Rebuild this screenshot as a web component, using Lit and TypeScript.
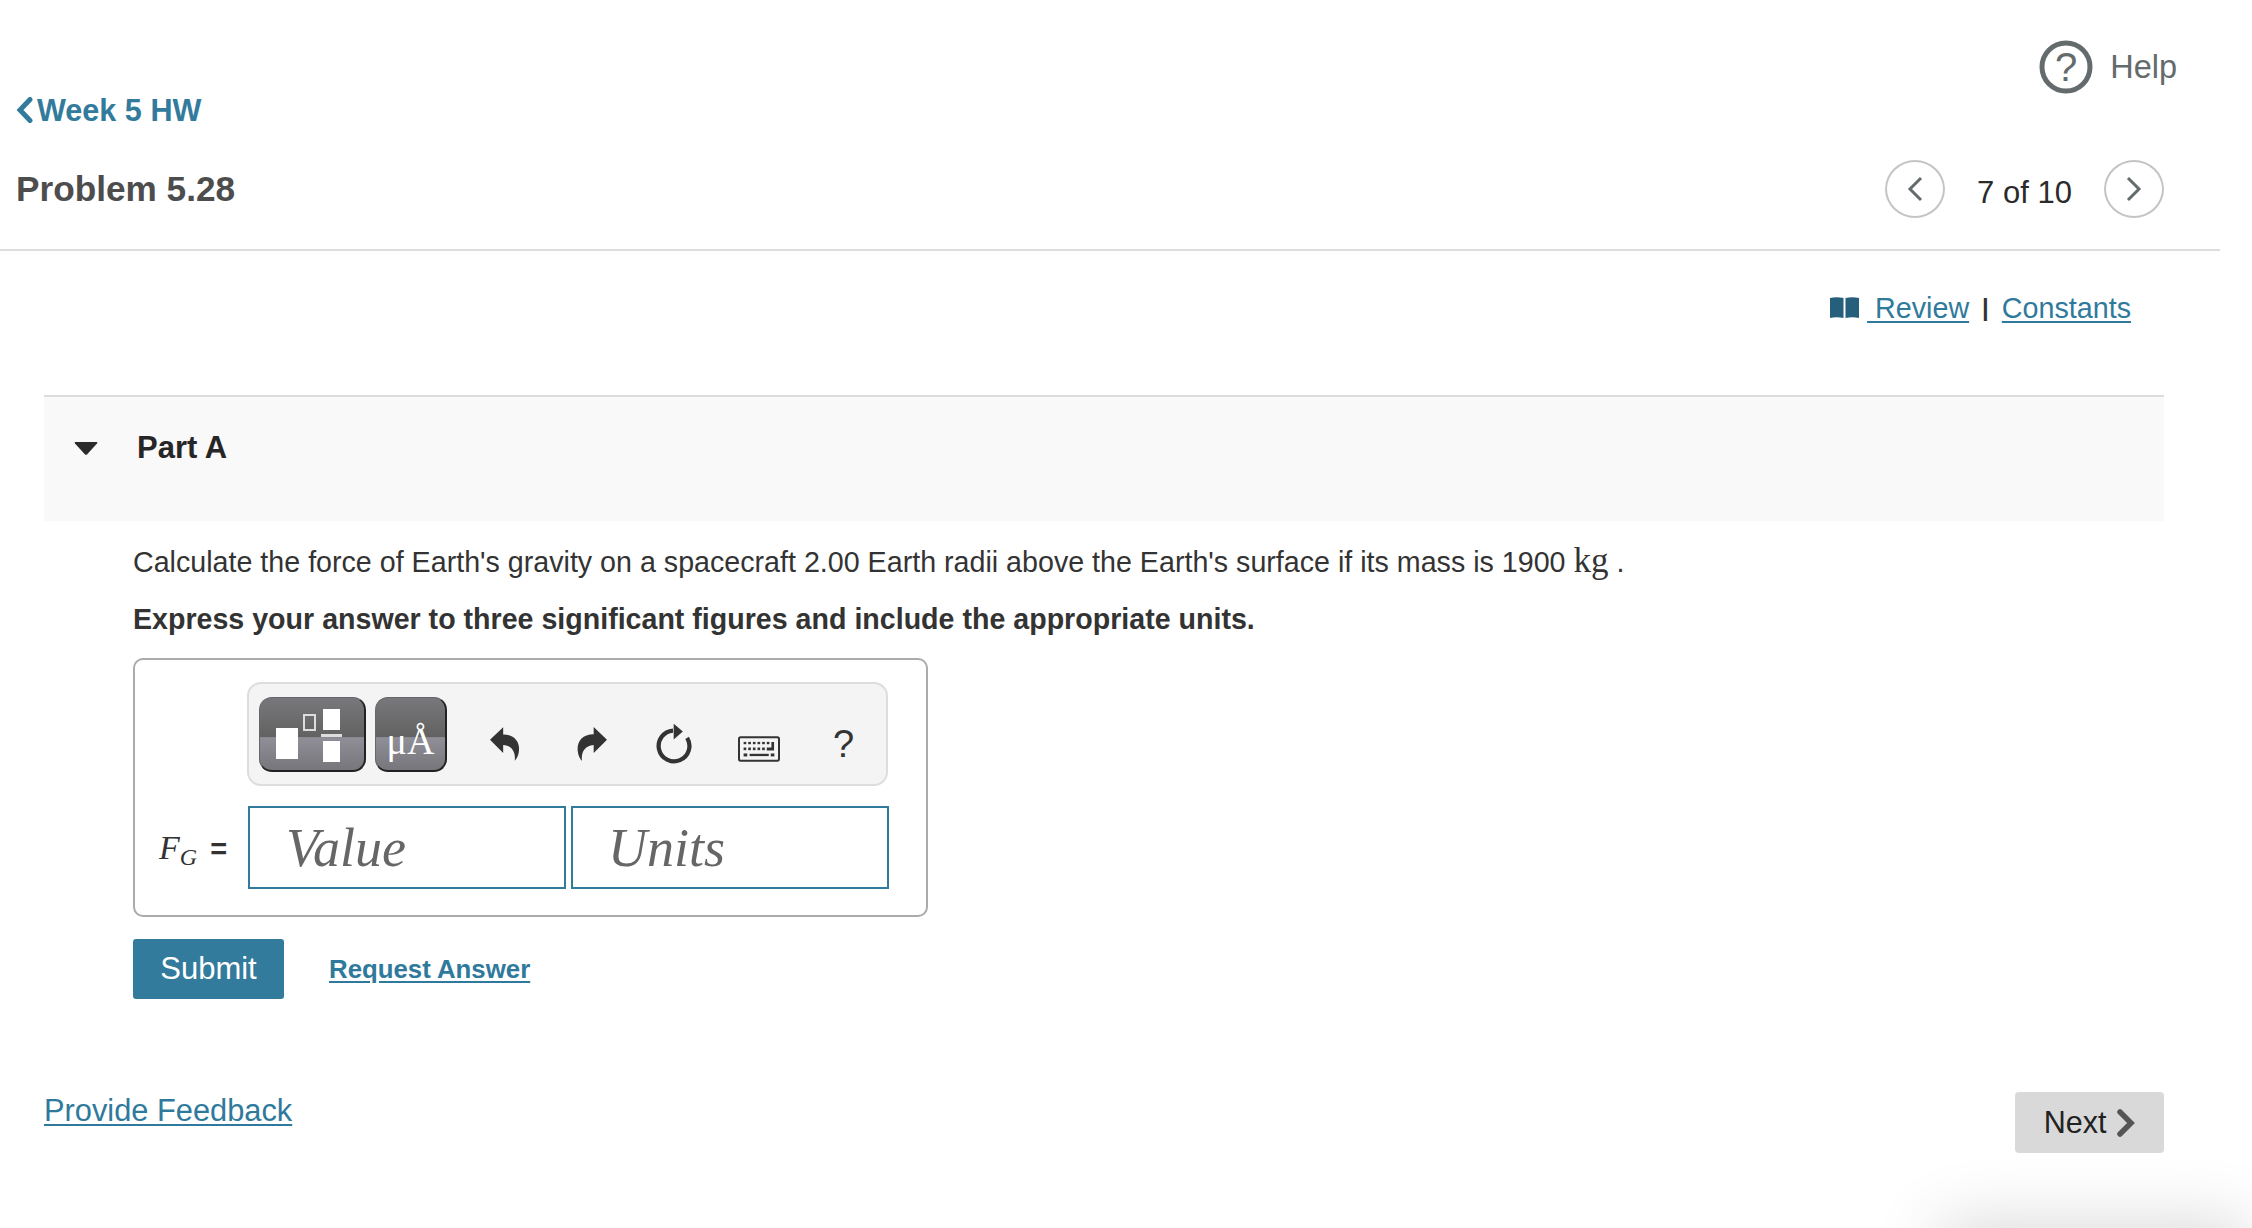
import { LitElement, html, css, svg } from "lit";
import { customElement } from "lit/decorators.js";

const keyRows = [
  [850, 864, 878, 892, 906, 920].map((x) => svg`<rect x=${x} y="217" width="8" height="7"/>`),
  [850, 864, 878, 892, 906].map((x) => svg`<rect x=${x} y="234" width="8" height="8"/>`),
];

@customElement("app-root")
export class AppRoot extends LitElement {
  static styles = css`
    :host { display: block; }
    .page {
      position: relative; height: 1228px; overflow: hidden; background: #fff;
      font-family: "Liberation Sans", Arial, sans-serif; color: #333;
    }
    a { color: #2f7a9c; }
    .header {
      width: 2220px; height: 251px; box-sizing: border-box; border-bottom: 2px solid #ddd;
      display: flex; justify-content: space-between;
    }
    .left { padding: 92px 0 0 16px; }
    .back { display: flex; align-items: center; gap: 4px; font-size: 30.6px; font-weight: 700; color: #337b9c; line-height: 36px; }
    .title { margin-top: 41px; font-size: 35.2px; font-weight: 700; color: #4d4d4d; line-height: 40px; }
    .right { display: flex; flex-direction: column; align-items: flex-end; padding: 40px 56px 0 0; }
    .help { display: flex; align-items: center; gap: 17px; font-size: 32.5px; color: #646b6c; margin-right: -13px; }
    .pager { display: flex; align-items: center; margin-top: 66px; }
    .circle {
      width: 60px; height: 58px; box-sizing: border-box; border: 2px solid #c4c4c4; border-radius: 50%;
      display: flex; align-items: center; justify-content: center;
    }
    .count { width: 159px; text-align: center; font-size: 31px; color: #2b2b2b; padding-top: 8px; }
    .links {
      display: flex; justify-content: flex-end; align-items: center; margin-top: 37px; padding-right: 121px;
      font-size: 28.7px; line-height: 40px;
    }
    .links a { text-underline-offset: 3px; text-decoration-thickness: 2px; }
    .links svg { margin-right: 8px; }
    .sep { margin: 0 13px 0 13px; color: #333; font-size: 24px; font-weight: 700; }
    .part { margin: 67px 88px 0 44px; height: 126px; box-sizing: border-box; background: #f9f9f9; border-top: 2px solid #ddd; display: flex; align-items: flex-start; padding: 33px 0 0 30px; }
    .part h2 { margin: 0 0 0 39px; font-size: 31px; line-height: 36px; font-weight: 700; color: #262626; }
    .part svg { margin-top: 12px; }
    .body { padding: 0 0 0 133px; }
    .prompt { margin: 22px 0 0; font-size: 28.65px; line-height: 36px; color: #333; }
    .kg { font-family: "Liberation Serif", serif; font-size: 35px; }
    .instr { margin: 21px 0 0; font-size: 28.6px; line-height: 36px; font-weight: 700; color: #333; }
    .editor {
      margin-top: 21px; width: 795px; height: 259px; box-sizing: border-box; border: 2px solid #ababab; border-radius: 10px;
      padding: 22px 0 0 112px;
    }
    .toolbar {
      width: 641px; height: 104px; box-sizing: border-box; border: 2px solid #ddd; border-radius: 14px; background: #f4f4f4;
      display: flex; align-items: center; padding-left: 10px;
    }
    .tbtn {
      height: 75px; box-sizing: border-box; border-radius: 13px; border: 1px solid #666; border-right: 2px solid #222; border-bottom: 2px solid #222;
      background: linear-gradient(#78777b 0, #626262 54%, #908f98 55%, #77767b 100%);
      display: flex; align-items: center; justify-content: center;
    }
    .t1 { width: 107px; }
    .t2 {
      width: 72px; margin-left: 9px; color: #fff; font-family: "Liberation Serif", serif; font-size: 38px; line-height: 1; padding-top: 14px;
    }
    .tool { display: block; margin-top: 20px; }
    .undo { margin-left: 43px; }
    .redo { margin-left: 58px; }
    .refresh { margin-left: 49px; }
    .kb { margin-left: 46px; margin-top: 30px; }
    .q { margin-left: 53px; margin-top: 20px; font-size: 38px; color: #333; line-height: 1; }
    .row { display: flex; align-items: center; margin-top: 20px; margin-left: -112px; padding-left: 24px; }
    .eq { width: 89px; font-family: "Liberation Serif", serif; font-size: 34px; color: #333; white-space: nowrap; }
    .eq i sub { font-size: 24px; line-height: 0; vertical-align: -6px; }
    .eq span { font-family: "Liberation Sans", sans-serif; font-size: 29px; font-weight: 700; margin-left: 13px; }
    .field {
      width: 318px; height: 83px; box-sizing: border-box; border: 2px solid #337b9c;
      font-family: "Liberation Serif", serif; font-style: italic; font-size: 54px; color: #666;
      display: flex; align-items: center; padding-left: 36px;
    }
    .field + .field { margin-left: 5px; padding-left: 35px; }
    .actions { display: flex; align-items: center; margin-top: 22px; }
    .submit {
      width: 151px; height: 60px; background: #337b9c; border-radius: 3px; color: #fff; font-size: 31px;
      display: flex; align-items: center; justify-content: center;
    }
    .req { margin-left: 45px; font-size: 25.8px; font-weight: 700; text-underline-offset: 3px; }
    .foot { display: flex; justify-content: space-between; align-items: flex-start; margin: 93px 88px 0 44px; }
    .fb { font-size: 30.8px; line-height: 38px; text-underline-offset: 3px; text-decoration-thickness: 2px; }
    .next {
      width: 149px; height: 61px; background: #d9d9d9; border-radius: 4px; color: #222; font-size: 30.5px;
      display: flex; align-items: center; justify-content: center; gap: 11px; box-sizing: border-box;
    }
    .glow {
      position: absolute; left: 1960px; top: 1245px; width: 270px; height: 60px;
      box-shadow: 0 0 70px 20px rgba(0, 0, 0, 0.16);
    }
  `;

  render() {
    return html`<div class="page">
      <div class="header">
        <div class="left">
          <div class="back">
            <svg width="17" height="26" viewBox="0 0 17 26"><path d="M14 2.5 L4 13 L14 23.5" fill="none" stroke="#337b9c" stroke-width="5" stroke-linecap="round" stroke-linejoin="miter"/></svg>
            <span>Week 5 HW</span>
          </div>
          <div class="title">Problem 5.28</div>
        </div>
        <div class="right">
          <div class="help">
            <svg width="54" height="54" viewBox="0 0 54 54"><circle cx="27" cy="27" r="24" fill="none" stroke="#646b6c" stroke-width="5"/><text x="27" y="41" text-anchor="middle" font-family="Liberation Sans" font-size="40" fill="#646b6c">?</text></svg>
            <span>Help</span>
          </div>
          <div class="pager">
            <div class="circle"><svg width="18" height="28" viewBox="0 0 18 28"><path d="M15 3 L4 14 L15 25" fill="none" stroke="#646b6c" stroke-width="3"/></svg></div>
            <div class="count">7 of 10</div>
            <div class="circle"><svg width="18" height="28" viewBox="0 0 18 28"><path d="M3 3 L14 14 L3 25" fill="none" stroke="#646b6c" stroke-width="3"/></svg></div>
          </div>
        </div>
      </div>
      <div class="links">
        <svg width="29" height="22" viewBox="0 0 29 22"><path d="M0 1 C4 0 9 0 13.5 1 V21 C9 20 4 20 0 21 Z M15.5 1 C20 0 25 0 29 1 V21 C25 20 20 20 15.5 21 Z" fill="#255f7c"/></svg>
        <a href="#">&nbsp;Review</a><span class="sep">|</span><a href="#">Constants</a>
      </div>
      <div class="part">
        <svg width="24" height="13" viewBox="0 0 24 13"><path d="M1.5 0 H22.5 Q24 0 23 1.5 L13 12.5 Q12 13.2 11 12.5 L1 1.5 Q0 0 1.5 0 Z" fill="#2b2b2b"/></svg>
        <h2>Part A</h2>
      </div>
      <div class="body">
        <p class="prompt">Calculate the force of Earth's gravity on a spacecraft 2.00 Earth radii above the Earth's surface if its mass is 1900 <span class="kg">kg</span> .</p>
        <p class="instr">Express your answer to three significant figures and include the appropriate units.</p>
        <div class="editor">
          <div class="toolbar">
            <div class="tbtn t1">
              <svg width="104" height="72" viewBox="0 0 104 72" fill="#fff">
                <rect x="16" y="30" width="22" height="31"/>
                <rect x="44" y="17" width="11" height="15" fill="none" stroke="#ddd" stroke-width="2"/>
                <rect x="63" y="11" width="17" height="21"/>
                <rect x="61" y="36" width="21" height="3" fill="#ddd"/>
                <rect x="63" y="43" width="17" height="21"/>
              </svg>
            </div>
            <div class="tbtn t2">μÅ</div>
            <svg class="tool undo" width="29" height="34" viewBox="90 170 88 102"><path d="M90 208 L130 170 V192 C165 192 180 215 178 240 C177 255 172 265 165 272 C168 250 160 226 130 224 V248 Z" fill="#333"/></svg>
            <svg class="tool redo" width="30" height="34" viewBox="352 170 90 102"><path d="M442 208 L402 170 V192 C367 192 352 215 354 240 C355 255 360 265 367 272 C364 250 372 226 402 224 V248 Z" fill="#333"/></svg>
            <svg class="tool refresh" width="36" height="40" viewBox="588 162 110 120"><path d="M683 203 A 47 47 0 1 1 640 181" fill="none" stroke="#333" stroke-width="13"/><path d="M642 160 L670 184 L642 208 Z" fill="#333"/></svg>
            <svg class="tool kb" width="42" height="26" viewBox="833 200 127 77">
              <rect x="836" y="203" width="121" height="71" rx="5" fill="#f4f4f4" stroke="#333" stroke-width="6"/>
              <g fill="#333">
                ${keyRows}
                <path d="M934 217 H942 V243 H920 V234 H934 Z"/>
                <rect x="850" y="252" width="11" height="9"/>
                <rect x="868" y="253" width="58" height="7"/>
                <rect x="932" y="252" width="11" height="9"/>
              </g>
            </svg>
            <span class="q">?</span>
          </div>
          <div class="row">
            <div class="eq"><i>F<sub>G</sub></i><span>=</span></div>
            <div class="field">Value</div>
            <div class="field">Units</div>
          </div>
        </div>
        <div class="actions">
          <div class="submit">Submit</div>
          <a class="req" href="#">Request Answer</a>
        </div>
      </div>
      <div class="foot">
        <a class="fb" href="#">Provide Feedback</a>
        <div class="next">
          <span>Next</span>
          <svg width="18" height="28" viewBox="0 0 18 28"><path d="M3 3 L14 14 L3 25" fill="none" stroke="#555" stroke-width="5.5" stroke-linecap="round"/></svg>
        </div>
      </div>
      <div class="glow"></div>
    </div>`;
  }
}
